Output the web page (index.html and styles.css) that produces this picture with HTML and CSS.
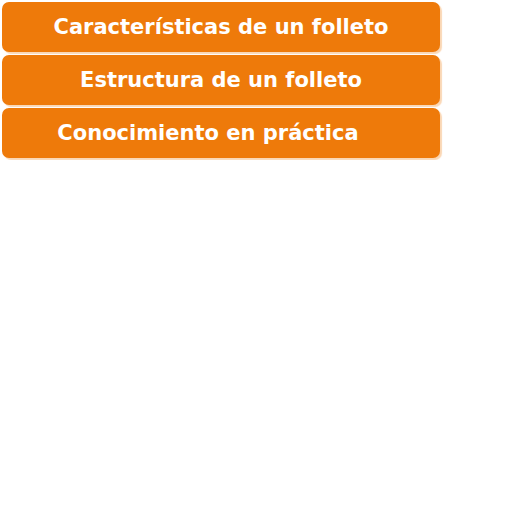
FILE: index.html
```html
<!DOCTYPE html>
<html lang="es">
<head>
    <meta charset="UTF-8">
    <meta name="viewport" content="width=device-width, initial-scale=1.0">
    <title>Folleto</title>
    <link rel="stylesheet" href="styles.css">
</head>
<body>

<div class="menu">
    <div class="menu-item">Características de un folleto</div>
    <div class="menu-item">Estructura de un folleto</div>
    <div class="menu-item menu-item-left">Conocimiento en práctica</div>
</div>

</body>
</html>
```

FILE: styles.css
```css
body {
    margin: 0;
    background-color: #fff;
    font-family: "DejaVu Sans", sans-serif;
}

.menu {
    display: flex;
    flex-direction: column;
    gap: 3px;
    padding: 2px;
    width: 438px;
}

.menu-item {
    height: 50px;
    display: flex;
    align-items: center;
    justify-content: center;
    background-color: #ee7a0a;
    color: #fff;
    font-weight: bold;
    font-size: 21px;
    border-radius: 7px;
    box-shadow: 2px 2px 1px rgba(238, 122, 10, 0.3);
}

.menu-item-left {
    padding-right: 26px;
}
```
